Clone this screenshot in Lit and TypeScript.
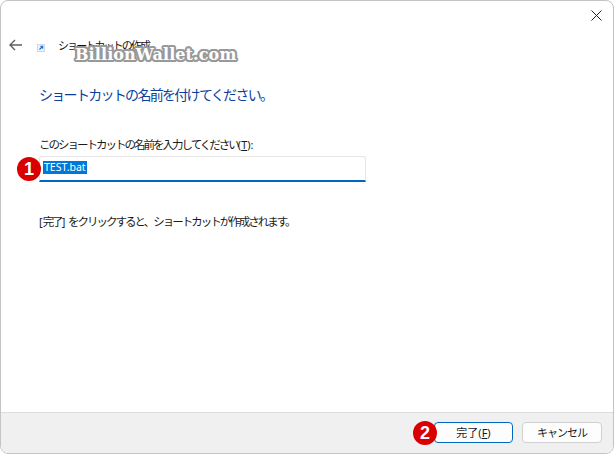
import { LitElement, html, css } from "lit";
import { customElement } from "lit/decorators.js";

@customElement("app-root")
export class AppRoot extends LitElement {
  static styles = css`
    :host {
      display: block;
      position: relative;
      width: 614px;
      height: 454px;
      background: #fff;
      font-family: "Noto Sans CJK JP", "Noto Sans", sans-serif;
      font-size: 12px;
      color: #1a1a1a;
    }
    .win {
      box-sizing: border-box;
      width: 614px;
      height: 454px;
      border: 1px solid #c4c4c8;
      border-radius: 8px;
      overflow: hidden;
      display: flex;
      flex-direction: column;
      background: #fff;
    }
    .titlebar {
      height: 29px;
      display: flex;
      justify-content: flex-end;
    }
    .close {
      width: 30px;
      box-sizing: border-box;
      padding: 9px 0 0 8px;
    }
    .close svg { display: block; }
    .head {
      height: 31px;
      display: flex;
      align-items: center;
      padding-left: 8px;
    }
    .back { width: 13px; height: 12px; margin-right: 15px; margin-top: -1px; }
    .appicon { width: 8px; height: 8px; margin-right: 13px; margin-top: 4px; }
    .title { font-size: 11px; line-height: 16px; margin-top: -1px; letter-spacing: -1.9px; color: #111; }
    .body {
      flex: 1;
      padding: 22px 0 0 38px;
      display: flex;
      flex-direction: column;
    }
    h1 {
      margin: 0;
      font-weight: 400;
      font-size: 14px;
      line-height: 22px;
      letter-spacing: -1.7px;
      color: #0a3f9e;
    }
    .label { margin-top: 31px; line-height: 17px; font-size: 11.5px; letter-spacing: -2px; }
    .lat { letter-spacing: 0; font-family: "Noto Sans", sans-serif; font-size: 11px; }
    u { text-underline-offset: 1px; }
    .field {
      margin-top: 3px;
      box-sizing: border-box;
      width: 327px;
      height: 26px;
      border: 1px solid #e6e6e6;
      border-bottom: 2px solid #0067c0;
      border-radius: 3px 3px 0 0;
      padding: 4px 0 0 3px;
      display: flex;
      align-items: flex-start;
    }
    .sel {
      background: #0078d7;
      color: #fff;
      font-family: "Noto Sans", sans-serif;
      font-size: 10.5px;
      line-height: 13px;
      padding: 0 1px;
    }
    .hint { margin-top: 31px; line-height: 17px; font-size: 11.5px; letter-spacing: -2px; }
    .footer {
      height: 41px;
      box-sizing: border-box;
      background: #f0f0f0;
      border-top: 1px solid #dcdcdc;
      display: flex;
      justify-content: flex-end;
      gap: 9px;
      padding: 9px 11px 0 0;
    }
    button {
      box-sizing: border-box;
      height: 21px;
      width: 80px;
      background: #fdfdfd;
      border: 1px solid #d0d0d0;
      border-radius: 4px;
      font: inherit;
      font-size: 11px;
      line-height: 17px;
      padding: 0;
      color: #1a1a1a;
      letter-spacing: -1px;
    }
    button.primary { width: 79px; border: 1.5px solid #0067c0; letter-spacing: 0; }
    .badge {
      position: absolute;
      width: 24px;
      height: 24px;
      border-radius: 50%;
      background: #d90000;
      color: #fff;
      font-family: "Liberation Sans", Arial, sans-serif;
      font-weight: 700;
      font-size: 18px;
      line-height: 24px;
      text-align: center;
    }
    .b1 { left: 17px; top: 157px; }
    .b2 { left: 413px; top: 421px; }
    .wm {
      position: absolute;
      left: 75px;
      top: 45px;
      font-family: "DejaVu Serif", "Liberation Serif", serif;
      font-weight: 700;
      font-size: 16px;
      line-height: 20px;
      letter-spacing: 0.1px;
      color: #fff;
      white-space: nowrap;
      text-shadow: -2px 0 0 #999, 2px 0 0 #999, 0 -2px 0 #999, 0 2px 0 #999,
        -2px -1px 0 #999, 2px -1px 0 #999, -2px 1px 0 #999, 2px 1px 0 #999,
        -1px -2px 0 #999, 1px -2px 0 #999, -1px 2px 0 #999, 1px 2px 0 #999;
    }
  `;

  render() {
    return html`
      <div class="win">
        <div class="titlebar">
          <div class="close">
            <svg width="11" height="11" viewBox="0 0 11 11">
              <path d="M0.5 0.5 L10.5 10.5 M10.5 0.5 L0.5 10.5" stroke="#222" stroke-width="1" fill="none"/>
            </svg>
          </div>
        </div>
        <div class="head">
          <svg class="back" viewBox="0 0 13 12">
            <path d="M1 6 H13 M6 1 L1 6 L6 11" stroke="#5f5f5f" stroke-width="1.4" fill="none"/>
          </svg>
          <svg class="appicon" viewBox="0 0 8 8">
            <rect x="0.5" y="0.5" width="7" height="7" fill="#eef3f9" stroke="#cfd8e3"/>
            <path d="M2.5 5.5 L5.5 2.5 M3.2 2.3 H5.7 V4.8" stroke="#1f6fd0" stroke-width="1.1" fill="none"/>
          </svg>
          <span class="title">ショートカットの作成</span>
        </div>
        <div class="body">
          <h1>ショートカットの名前を付けてください。</h1>
          <div class="label">このショートカットの名前を入力してください<span class="lat">(<u>T</u>):</span></div>
          <div class="field"><span class="sel">TEST.bat</span></div>
          <div class="hint"><span class="lat">[</span>完了<span class="lat">]&nbsp;</span>をクリックすると、ショートカットが作成されます。</div>
        </div>
        <div class="footer">
          <button class="primary">完了<span class="lat">(<u>F</u>)</span></button>
          <button>キャンセル</button>
        </div>
      </div>
      <div class="badge b1">1</div>
      <div class="badge b2">2</div>
      <div class="wm">BillionWallet.com</div>
    `;
  }
}
